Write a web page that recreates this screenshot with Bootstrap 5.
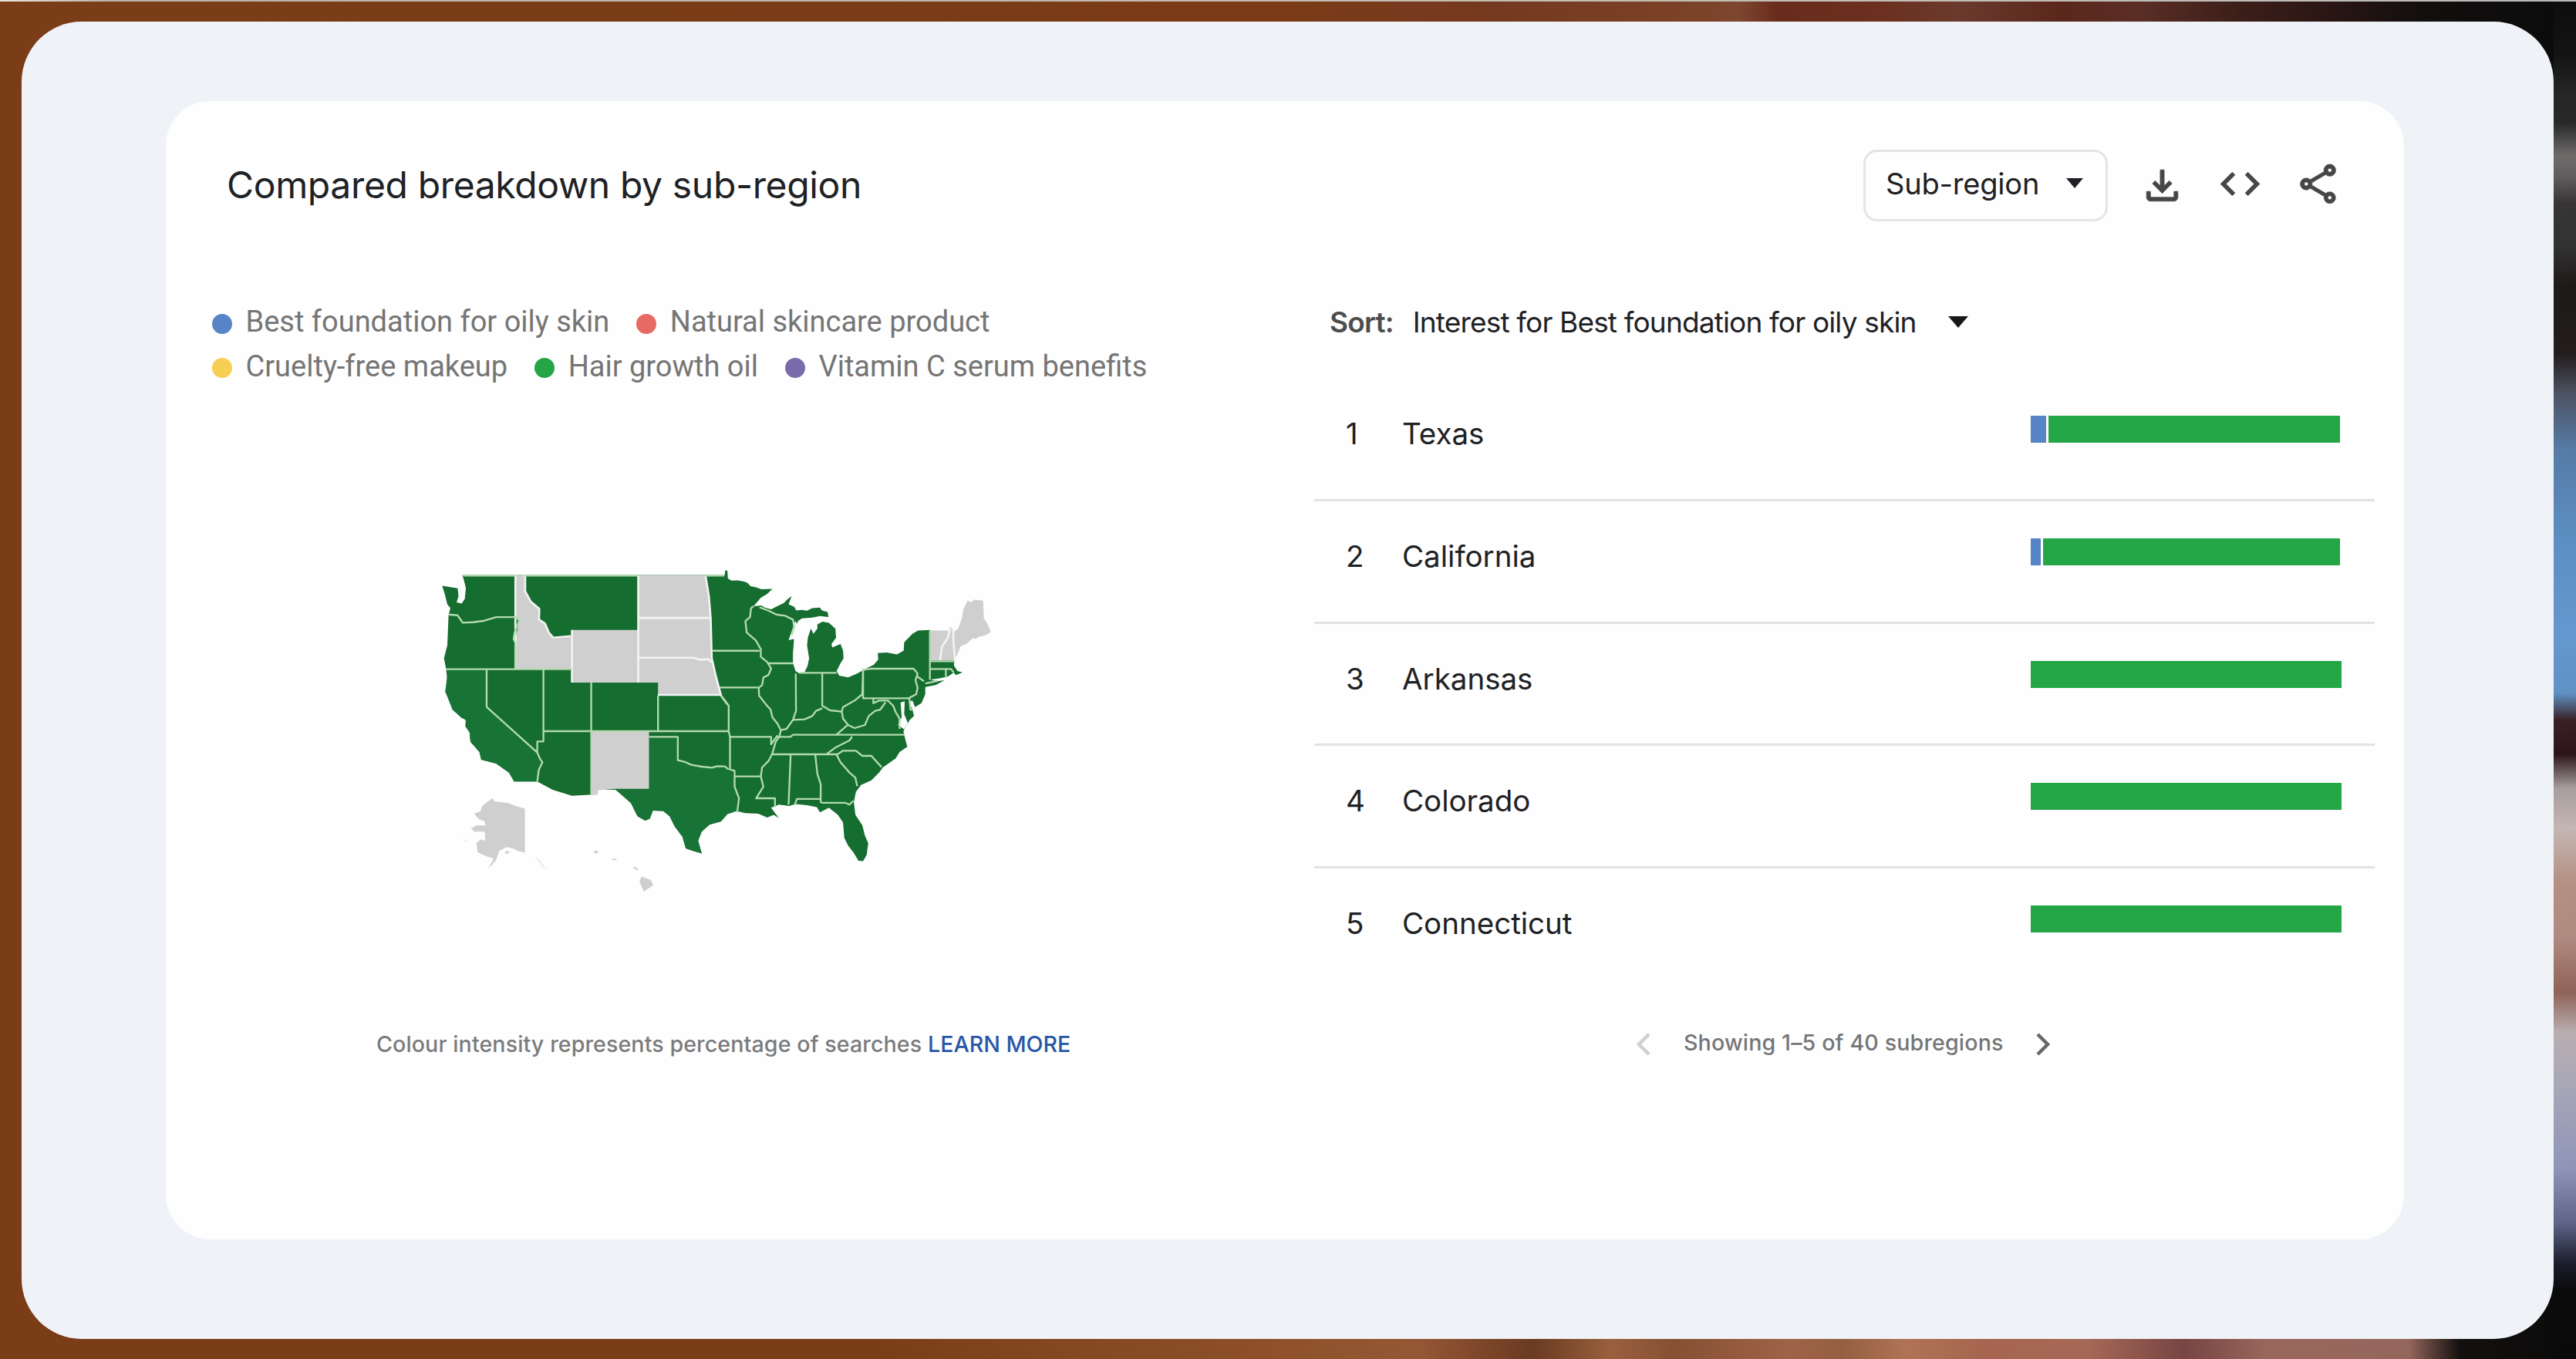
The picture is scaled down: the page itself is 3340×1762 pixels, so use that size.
<!DOCTYPE html>
<html lang="en">
<head>
<meta charset="utf-8">
<meta name="viewport" content="width=device-width, initial-scale=1">
<title>Compared breakdown by sub-region</title>
<link href="https://cdn.jsdelivr.net/npm/bootstrap@5.3.0/dist/css/bootstrap.min.css" rel="stylesheet">
<style>
html, body { height: 100%; }
body {
  font-family: Inter, "Liberation Sans", sans-serif;
  color: #202124;
  overflow: hidden;
  padding: 28px 29px 26px 28px;
  background:
    linear-gradient(90deg, #e9e6e0, #bcb4a6 4%, #c3beb4 70%, #bbb) 0 0 / 100% 2px no-repeat,
    linear-gradient(180deg, #0d0d0d 0, #141414 4%, #262626 7%, #282828 9%, #6f6c6c 11.5%, #5f5d5d 13%, #363434 15%, #333 18%, #1f1a1a 21%, #221c1c 26%, #4e5364 29%, #567ba5 33%, #5c8fc4 40%, #6499cf 47%, #5f91c5 51%, #3a2024 53%, #2c1519 55.5%, #a79e9d 58%, #c4b6b3 61%, #b58f82 65%, #b08a80 69%, #8f6257 73%, #b9aeb0 76%, #a8a7b8 80%, #8f94b8 86%, #5d6488 90%, #1a1d2a 93%, #0b0b0c 95%, #0a0a0a 100%) 100% 0 / 29px 100% no-repeat,
    linear-gradient(90deg, #7b3d18 0, #7b3b18 50%, #75391f 58%, #7b4327 66%, #7d4630 67.5%, #692c1c 69%, #6b301f 73%, #6b3a2d 76%, #5b271b 80%, #5a2e26 83%, #3c1e19 87%, #261513 91%, #120f0e 94%, #0b0b0b 100%) 0 0 / 100% 120px no-repeat,
    linear-gradient(90deg, #7b3d18 0, #7b3d18 34%, #834722 41%, #8e4f2a 49%, #965735 55%, #6a3a22 59.5%, #98603d 62.5%, #875033 65%, #9e6348 69.5%, #955f41 71.5%, #b07355 74%, #a76550 77%, #a66856 81%, #774543 84.8%, #99675c 88%, #94665c 93.5%, #14100f 95.5%, #0a0a0a 100%) 0 100% / 100% 120px no-repeat,
    #7b3d18;
}
.backdrop { background: #eff3f8; border-radius: 78px; padding: 103px 194px 129px 187px; }
.panel { background: #fefefe; border-radius: 58px; padding-top: 63px; }
.head-row { padding: 0 81px 0 79px; gap: 40px; height: 93px; }
.head-row h1 { font-size: 48px; font-weight: 400; letter-spacing: -.35px; line-height: 60px; padding-bottom: 2px; }
.region-btn { width: 317px; height: 93px; border: 3px solid #e3e4e5; border-radius: 18px; font-size: 38px; letter-spacing: -.2px; line-height: 60px; padding: 0 29px 6px 26px; color: #202124; }
.tool-icon { width: 61px; height: 61px; fill: #444746; stroke: #444746; stroke-width: .3; }
.lifted { margin-bottom: 4px; }
.map-side { width: 1489px; padding-top: 102px; }
.rank-side { width: 1375px; padding-top: 102px; }
.legend-line { font-family: Roboto, "Liberation Sans", sans-serif; font-size: 38px; line-height: 57.5px; height: 57.5px; color: #757575; gap: 34.5px; padding-left: 59.5px; }
.legend-line span { gap: 18px; }
.legend-line i { width: 26px; height: 26px; border-radius: 50%; margin-top: 4px; }
.us-map { width: 733px; height: 450px; margin: 216px 0 0 345px; }
.foot-note { font-size: 28.6px; font-weight: 500; letter-spacing: .1px; line-height: 40px; margin: 164px 0 0 273px; color: #7a7b7c; white-space: nowrap; }
.foot-note a { color: #2757a6; letter-spacing: 0; }
.sort-line { font-size: 37px; letter-spacing: -.83px; line-height: 57px; padding-left: 20px; }
.sort-line b { font-weight: 600; color: #4c4d4f; margin-right: 25px; }
.ranking { margin-top: 45px; }
.rank-row { height: 158.75px; border-bottom: 3px solid #e2e2e2; padding: 0 43px 0 41px; font-size: 38.5px; line-height: 58px; }
.rank-row:last-child { border-color: transparent; }
.rank-row .pos { width: 73px; padding-top: 42px; }
.rank-row .place { padding-top: 42px; }
.stack { width: 403px; height: 35px; margin-top: 48px; gap: 3px; }
.stack.rounded-down { padding-right: 2px; }
.pager { font-size: 28.6px; font-weight: 500; letter-spacing: .15px; line-height: 40px; color: #757678; margin-top: 47px; padding-left: 418px; gap: 41px; }
.pager svg { width: 20px; height: 30px; fill: none; stroke-width: 4.5; margin-top: 5px; }
.b-blue { background: #5684c4; } .b-red { background: #e76a63; } .b-yellow { background: #f7cf52; } .b-green { background: #24a546; } .b-purple { background: #7a6bab; }
</style>
</head>
<body>
<main class="backdrop h-100">
 <section class="panel h-100">
  <header class="head-row d-flex align-items-center">
    <h1 class="mb-0 me-auto">Compared breakdown by sub-region</h1>
    <button class="region-btn bg-transparent d-flex align-items-center justify-content-between" type="button">Sub-region
      <svg width="22" height="13" viewBox="0 0 22 13"><path d="M0 0h22L11 13z" fill="#202124"/></svg>
    </button>
    <svg class="tool-icon" viewBox="0 0 24 24"><path d="M18 15v3H6v-3H4v3c0 1.1.9 2 2 2h12c1.1 0 2-.9 2-2v-3h-2zm-1-4-1.41-1.41L13 12.17V4h-2v8.17L8.41 9.59 7 11l5 5 5-5z"/></svg>
    <svg class="tool-icon lifted" viewBox="0 0 24 24"><path d="M9.4 16.6 4.8 12l4.6-4.6L8 6l-6 6 6 6 1.4-1.4zm5.2 0 4.6-4.6-4.6-4.6L16 6l6 6-6 6-1.4-1.4z"/></svg>
    <svg class="tool-icon lifted" viewBox="0 0 24 24"><path d="M18 16.08c-.76 0-1.44.3-1.96.77L8.91 12.7c.05-.23.09-.46.09-.7s-.04-.47-.09-.7l7.05-4.11c.54.5 1.25.81 2.04.81 1.66 0 3-1.34 3-3s-1.34-3-3-3-3 1.34-3 3c0 .24.04.47.09.7L8.04 9.81C7.5 9.31 6.79 9 6 9c-1.66 0-3 1.34-3 3s1.34 3 3 3c.79 0 1.5-.31 2.04-.81l7.12 4.16c-.05.21-.08.43-.08.65 0 1.61 1.31 2.92 2.92 2.92s2.92-1.31 2.92-2.92-1.31-2.92-2.92-2.92zM18 4c.55 0 1 .45 1 1s-.45 1-1 1-1-.45-1-1 .45-1 1-1zM6 13c-.55 0-1-.45-1-1s.45-1 1-1 1 .45 1 1-.45 1-1 1zm12 7.02c-.55 0-1-.45-1-1s.45-1 1-1 1 .45 1 1-.45 1-1 1z"/></svg>
  </header>
  <div class="d-flex">
   <div class="map-side flex-shrink-0">
    <div class="legend-line d-flex">
      <span class="d-flex align-items-center"><i class="b-blue"></i>Best foundation for oily skin</span>
      <span class="d-flex align-items-center"><i class="b-red"></i>Natural skincare product</span>
    </div>
    <div class="legend-line d-flex">
      <span class="d-flex align-items-center"><i class="b-yellow"></i>Cruelty-free makeup</span>
      <span class="d-flex align-items-center"><i class="b-green"></i>Hair growth oil</span>
      <span class="d-flex align-items-center"><i class="b-purple"></i>Vitamin C serum benefits</span>
    </div>
    <svg class="us-map d-block" viewBox="0 0 2200 1350">
      <!-- mainland -->
      <path fill="#156d2f" d="M118 76H1140L1141 58 1150 60 1152 90 1165 98 1190 97 1215 102 1228 107 1240 120 1262 124 1282 132 1325 130 1305 150 1280 165 1252 198 1282 195 1295 203 1320 210 1350 195 1370 185 1382 172 1400 158 1388 190 1410 200 1418 214 1440 212 1460 215 1480 205 1510 203 1518 214 1540 220 1543 240 1510 236 1480 242 1440 245 1425 255 1422 262 1412 285 1403 310 1409 330 1405 380 1405 420 1415 450 1430 460 1450 455 1462 430 1468 400 1460 350 1463 320 1475 285 1485 305 1500 285 1500 268 1520 258 1545 262 1570 285 1573 320 1555 345 1558 358 1590 345 1600 370 1602 400 1590 420 1575 450 1585 468 1620 475 1655 460 1690 440 1720 425 1737 405 1735 380 1770 378 1810 385 1836 370 1838 338 1870 305 1892 292 1940 290 1940 408 2032 408 2032 430 2045 450 2065 455 2040 466 2030 456 2010 470 1980 478 1940 484 1965 490 1995 486 1960 505 1920 512 1920 540 1905 575 1880 590 1870 565 1856 570 1870 600 1876 625 1860 640 1845 665 1835 685 1842 715 1850 745 1820 765 1805 790 1755 825 1740 845 1710 875 1670 893 1650 920 1642 960 1648 1010 1675 1050 1685 1090 1698 1120 1692 1165 1678 1190 1660 1188 1640 1155 1620 1130 1605 1100 1600 1040 1580 1010 1545 982 1510 1000 1498 980 1460 972 1415 968 1390 975 1350 970 1320 982 1335 1002 1350 1022 1330 1010 1305 1020 1270 1005 1220 1003 1185 995 1150 1007 1125 1035 1080 1048 1050 1075 1036 1110 1050 1160 1015 1150 988 1140 975 1095 945 1055 925 1015 900 995 860 993 848 1025 830 1032 800 1015 775 965 740 930 715 912H645V930L545 935 470 912 410 880 320 880 300 845 250 810 192 795 185 765 150 725 147 690 130 665 132 640 115 632 80 600 65 550 52 530 62 500 55 440 47 400 60 350 65 230 72 205 60 190 50 150 40 118 100 128 108 185 128 165 130 120z"/>
      <!-- largest states carry a lighter shade -->
      <path fill="#187436" d="M848 710H955V797L1000 810 1050 825 1140 820 1160 833 1178 870 1190 950 1185 995 1150 1007 1125 1035 1080 1048 1050 1075 1036 1110 1050 1160 988 1140 975 1095 945 1055 925 1015 900 995 860 993 848 1025 830 1032 800 1015 775 965 715 912H848zM62 448H213V590L410 765 420 805 410 880H320L300 845 250 810 192 795 185 765 150 725 147 690 130 640 80 600 52 530z"/>
      <!-- states without data -->
      <g fill="#d0cfd0">
        <path d="M325 76H363V140L385 180 418 208 417 250 440 265 455 300 472 320 545 316V290H803V76H1065L1078 160 1085 245 1088 400 1105 470 1125 545H880V495H545V444H325V325L340 250 325 238zM620 686H845V908H712L645 914V930H618z"/>
        <path d="M1941 292H2012L2016 278 2024 283 2028 300 2048 285 2064 240 2068 210 2085 175 2098 182 2110 172 2145 176 2148 245 2162 265 2175 298 2155 310 2125 318 2117 325 2105 322 2080 345 2058 353 2045 385 2030 408H1941z"/>
        <path d="M235 945 245 958 270 960 300 965 325 975 362 985V1157L335 1150 315 1140 290 1135 262 1150 250 1185 218 1222 240 1180 210 1170 178 1155 173 1120 190 1105 208 1110 205 1075 165 1075 152 1062 175 1050 208 1052 205 1035 180 1025 165 1005 190 995 195 975 215 960z"/>
        <path d="M282 1155l12-6 10 5-14 8zM628 1155l10-7 10 4-8 9zM698 1183l12-4 12 5-12 3zM782 1212l12 1 10 10-10 1zM808 1270 815 1250 850 1262 862 1283 825 1308z"/>
        <path fill="#ededed" d="M120 1105l14 2 8 5-14-1zM395 1172l20 8 20 28 20 14-24-8-22-30z"/>
      </g>
      <!-- water inlets -->
      <path fill="#fefefe" d="M104 88l12 25-14 10 2 35-8 25 20 4 12-18 4-40-10-42zM1824 572l16-4-2 50 14 34-14 25-24-17 14-30zM1388 330l12-35 14-40 6 10-12 60z"/>
      <!-- borders between grey states -->
      <g fill="none" stroke="#f3f4f3" stroke-width="8">
        <path d="M545 290V495M803 290V495M803 243H1085M803 398H1015L1045 406 1075 404 1088 415M803 78V290M880 543H1125M325 76V444M363 76V140L385 180 418 208 417 250 440 265 455 300 472 320 540 314M1065 80 1078 160 1085 245 1089 400 1105 470 1125 545 1150 580"/>
        <path d="M2016 285 2008 320 1985 355 1977 408M2028 285 2030 340 2035 400"/>
      </g>
      <!-- borders between green states -->
      <g fill="none" stroke="#b4dab0" stroke-width="7" stroke-linejoin="round">
        <path d="M118 79H325M363 79H803M65 230 100 233 120 262 160 260 205 254 250 240H325L340 252 322 300 318 325 325 340V444M55 443H545M213 445V590L410 767M434 445V724H410V767L420 790 430 805 416 835 410 880M434 684H1155M620 495V930M880 545V684M845 706H957V797L985 804 1010 815 1050 822 1090 826 1110 820 1140 821 1155 833"/>
        <path d="M1065 79H1138M1090 371H1275M1120 514H1270M1125 545 1155 585V684L1160 706V833L1178 838V900L1195 945 1188 1000M1160 706H1320V735L1345 700M1178 860H1280"/>
        <path d="M1252 198 1242 205 1238 240 1220 255 1225 300 1260 330 1280 365 1280 395 1305 415 1320 440 1310 465 1290 475 1285 505 1272 515 1273 545 1300 580 1318 600 1325 630 1345 655 1358 680 1352 705 1338 725 1325 770 1310 800 1285 825 1280 860 1290 900 1262 945H1335V980"/>
        <path d="M1275 202 1310 215 1340 230 1375 235 1405 250 1410 280 1400 310M1305 420H1405M1416 460 1417 605 1405 640 1380 675 1358 680M1430 457H1575M1519 460V585L1550 603 1595 608 1600 590 1645 565 1675 540 1678 445M1405 640 1450 638 1480 625 1495 605 1519 595M1595 608 1600 635 1620 660 1645 672 1685 660 1700 625 1725 605 1745 600 1765 572M1617 660 1575 697"/>
        <path d="M1345 706H1395L1405 698H1840M1322 774H1580M1396 776 1388 970M1492 776 1500 850 1513 890V960L1520 963H1610L1625 970 1640 955M1412 972 1420 948H1512M1635 705 1625 720 1570 748 1537 772M1575 776 1600 760H1650L1675 780H1710L1750 824M1575 776 1590 805 1625 845 1648 865 1655 898"/>
        <path d="M1680 445 1705 441H1875L1890 460 1882 485 1890 515 1885 540 1855 556H1678V440M1888 470 1915 490M1718 556V575L1740 565 1775 565 1795 585 1805 610 1820 635 1820 675M1858 556 1862 600H1872M1938 292V484M1938 412H2035M1938 442H2020L2030 455M2000 442V472M1920 498 1970 488"/>
      </g>
    </svg>
    <p class="foot-note mb-0">Colour intensity represents percentage of searches <a class="text-decoration-none" href="#">LEARN MORE</a></p>
   </div>
   <div class="rank-side flex-shrink-0">
    <div class="sort-line d-flex align-items-center"><b>Sort:</b>Interest for Best foundation for oily skin
      <svg class="ms-auto" width="26" height="15" viewBox="0 0 26 15" style="margin-right:527px"><path d="M0 0h26L13 15z" fill="#17181a"/></svg>
    </div>
    <div class="ranking">
      <div class="rank-row d-flex align-items-start"><span class="pos">1</span><span class="place me-auto">Texas</span><div class="stack rounded-down d-flex"><div class="b-blue" style="width:20px"></div><div class="b-green flex-fill"></div></div></div>
      <div class="rank-row d-flex align-items-start"><span class="pos">2</span><span class="place me-auto">California</span><div class="stack rounded-down d-flex"><div class="b-blue" style="width:13px"></div><div class="b-green flex-fill"></div></div></div>
      <div class="rank-row d-flex align-items-start"><span class="pos">3</span><span class="place me-auto">Arkansas</span><div class="stack d-flex"><div class="b-green flex-fill"></div></div></div>
      <div class="rank-row d-flex align-items-start"><span class="pos">4</span><span class="place me-auto">Colorado</span><div class="stack d-flex"><div class="b-green flex-fill"></div></div></div>
      <div class="rank-row d-flex align-items-start"><span class="pos">5</span><span class="place me-auto">Connecticut</span><div class="stack d-flex"><div class="b-green flex-fill"></div></div></div>
    </div>
    <div class="pager d-flex align-items-center">
      <svg viewBox="0 0 20 30" stroke="#cfcfcf"><path d="M16 2 3 15l13 13"/></svg>
      <span>Showing 1–5 of 40 subregions</span>
      <svg viewBox="0 0 20 30" stroke="#666769"><path d="M3 2l13 13L3 28"/></svg>
    </div>
   </div>
  </div>
 </section>
</main>
<script src="https://cdn.jsdelivr.net/npm/bootstrap@5.3.0/dist/js/bootstrap.bundle.min.js"></script>
</body>
</html>
